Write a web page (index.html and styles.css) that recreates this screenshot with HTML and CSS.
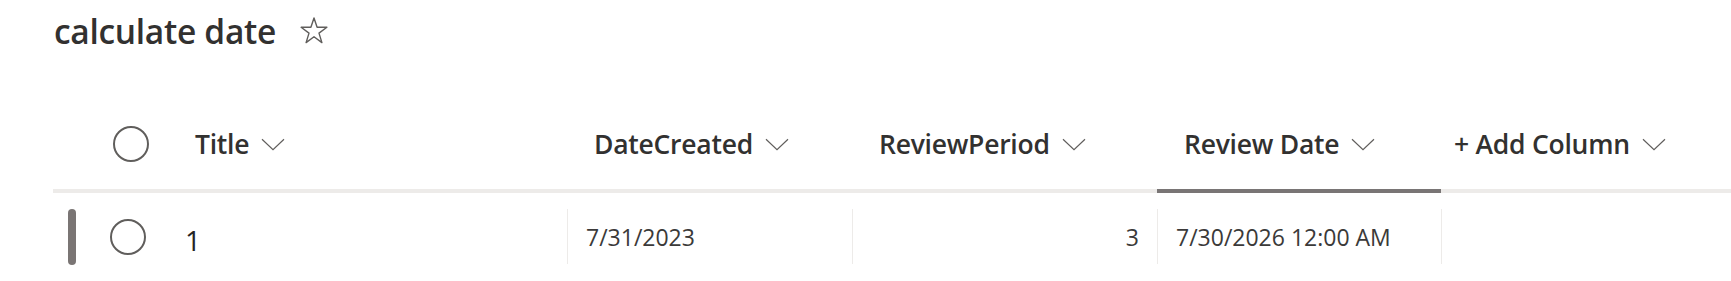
FILE: index.html
```html
<!DOCTYPE html>
<html lang="en">
<head>
<meta charset="utf-8">
<title>calculate date</title>
<link rel="stylesheet" href="styles.css">
</head>
<body>
<div class="page">
  <div class="title-bar">
    <h1 class="list-title">calculate date</h1>
    <svg class="star" width="28" height="27" viewBox="0 0 28 27" aria-hidden="true">
      <polygon points="14,1 17.1,10.3 26.9,10.3 19,16.1 21.9,25.6 14,19.8 6.1,25.6 9,16.1 1.1,10.3 10.9,10.3" fill="none" stroke="#605e5c" stroke-width="1.4" stroke-linejoin="round"/>
    </svg>
  </div>

  <div class="list-header">
    <div class="hcell check-cell"><span class="circle"></span></div>
    <div class="hcell title-col"><span class="hlabel">Title</span><svg class="chev" width="24" height="13" viewBox="0 0 24 13"><path d="M1 1.3 L12 11.6 L23 1.3" fill="none" stroke="#605e5c" stroke-width="1.2"/></svg></div>
    <div class="hcell"><span class="hlabel">DateCreated</span><svg class="chev" width="24" height="13" viewBox="0 0 24 13"><path d="M1 1.3 L12 11.6 L23 1.3" fill="none" stroke="#605e5c" stroke-width="1.2"/></svg></div>
    <div class="hcell"><span class="hlabel">ReviewPeriod</span><svg class="chev" width="24" height="13" viewBox="0 0 24 13"><path d="M1 1.3 L12 11.6 L23 1.3" fill="none" stroke="#605e5c" stroke-width="1.2"/></svg></div>
    <div class="hcell active"><span class="hlabel">Review Date</span><svg class="chev" width="24" height="13" viewBox="0 0 24 13"><path d="M1 1.3 L12 11.6 L23 1.3" fill="none" stroke="#605e5c" stroke-width="1.2"/></svg></div>
    <div class="hcell add-col"><span class="hlabel">+ Add Column</span><svg class="chev" width="24" height="13" viewBox="0 0 24 13"><path d="M1 1.3 L12 11.6 L23 1.3" fill="none" stroke="#605e5c" stroke-width="1.2"/></svg></div>
  </div>

  <div class="list-row">
    <div class="rcell check-cell"><span class="row-bar"></span><span class="circle row-circle"></span></div>
    <div class="rcell title-col title-value">1</div>
    <div class="rcell sep">7/31/2023</div>
    <div class="rcell sep num">3</div>
    <div class="rcell sep">7/30/2026 12:00 AM</div>
    <div class="rcell sep"></div>
  </div>
</div>
</body>
</html>
```

FILE: styles.css
```css
html, body {
  margin: 0;
  padding: 0;
  background: #ffffff;
}

body {
  font-family: "Open Sans", "Noto Sans", "Liberation Sans", sans-serif;
  color: #323130;
  width: 1731px;
  height: 281px;
  overflow: hidden;
}

.page {
  padding-left: 53px;
}

.title-bar {
  display: flex;
  align-items: center;
  height: 62px;
  padding-left: 1px;
  gap: 24px;
  margin-bottom: 37px;
}

.list-title {
  margin: 0;
  font-size: 33.5px;
  font-weight: 600;
  line-height: 44px;
  color: #323130;
  letter-spacing: -0.3px;
}

.star {
  display: block;
  margin-top: -2px;
}

.list-header,
.list-row {
  display: grid;
  grid-template-columns: 115px 399px 285px 305px 284px 1fr;
}

.hcell {
  display: flex;
  align-items: center;
  height: 90px;
  border-bottom: 4px solid #edebe9;
  padding-left: 27px;
  gap: 12px;
}

.hcell.active {
  border-bottom-color: #797575;
}

.hcell.add-col {
  padding-left: 13px;
}

.hcell.check-cell {
  padding-left: 60px;
}

.hlabel {
  font-size: 26.5px;
  font-weight: 600;
  color: #323130;
  white-space: nowrap;
  letter-spacing: -0.25px;
}

.chev {
  display: block;
  margin-top: 1px;
}

.circle {
  display: block;
  width: 32px;
  height: 32px;
  border: 2px solid #605e5c;
  border-radius: 50%;
  box-sizing: content-box;
}

.list-row {
  padding-top: 16px;
}

.rcell {
  display: flex;
  align-items: center;
  height: 55px;
  padding-left: 18px;
  font-size: 23px;
  color: #3b3a39;
  white-space: nowrap;
}

.rcell.sep {
  border-left: 1px solid #edebe9;
}

.rcell.num {
  justify-content: flex-end;
  padding-right: 18px;
}

.rcell.check-cell {
  padding-left: 15px;
}

.row-bar {
  display: block;
  width: 8px;
  height: 56px;
  border-radius: 4px;
  background: #7a7574;
}

.row-circle {
  margin-left: 34px;
  margin-top: 1px;
}

.title-value {
  font-size: 28px;
  font-weight: 400;
  color: #252423;
  padding-top: 6px;
  padding-left: 17px;
  box-sizing: border-box;
}
```
